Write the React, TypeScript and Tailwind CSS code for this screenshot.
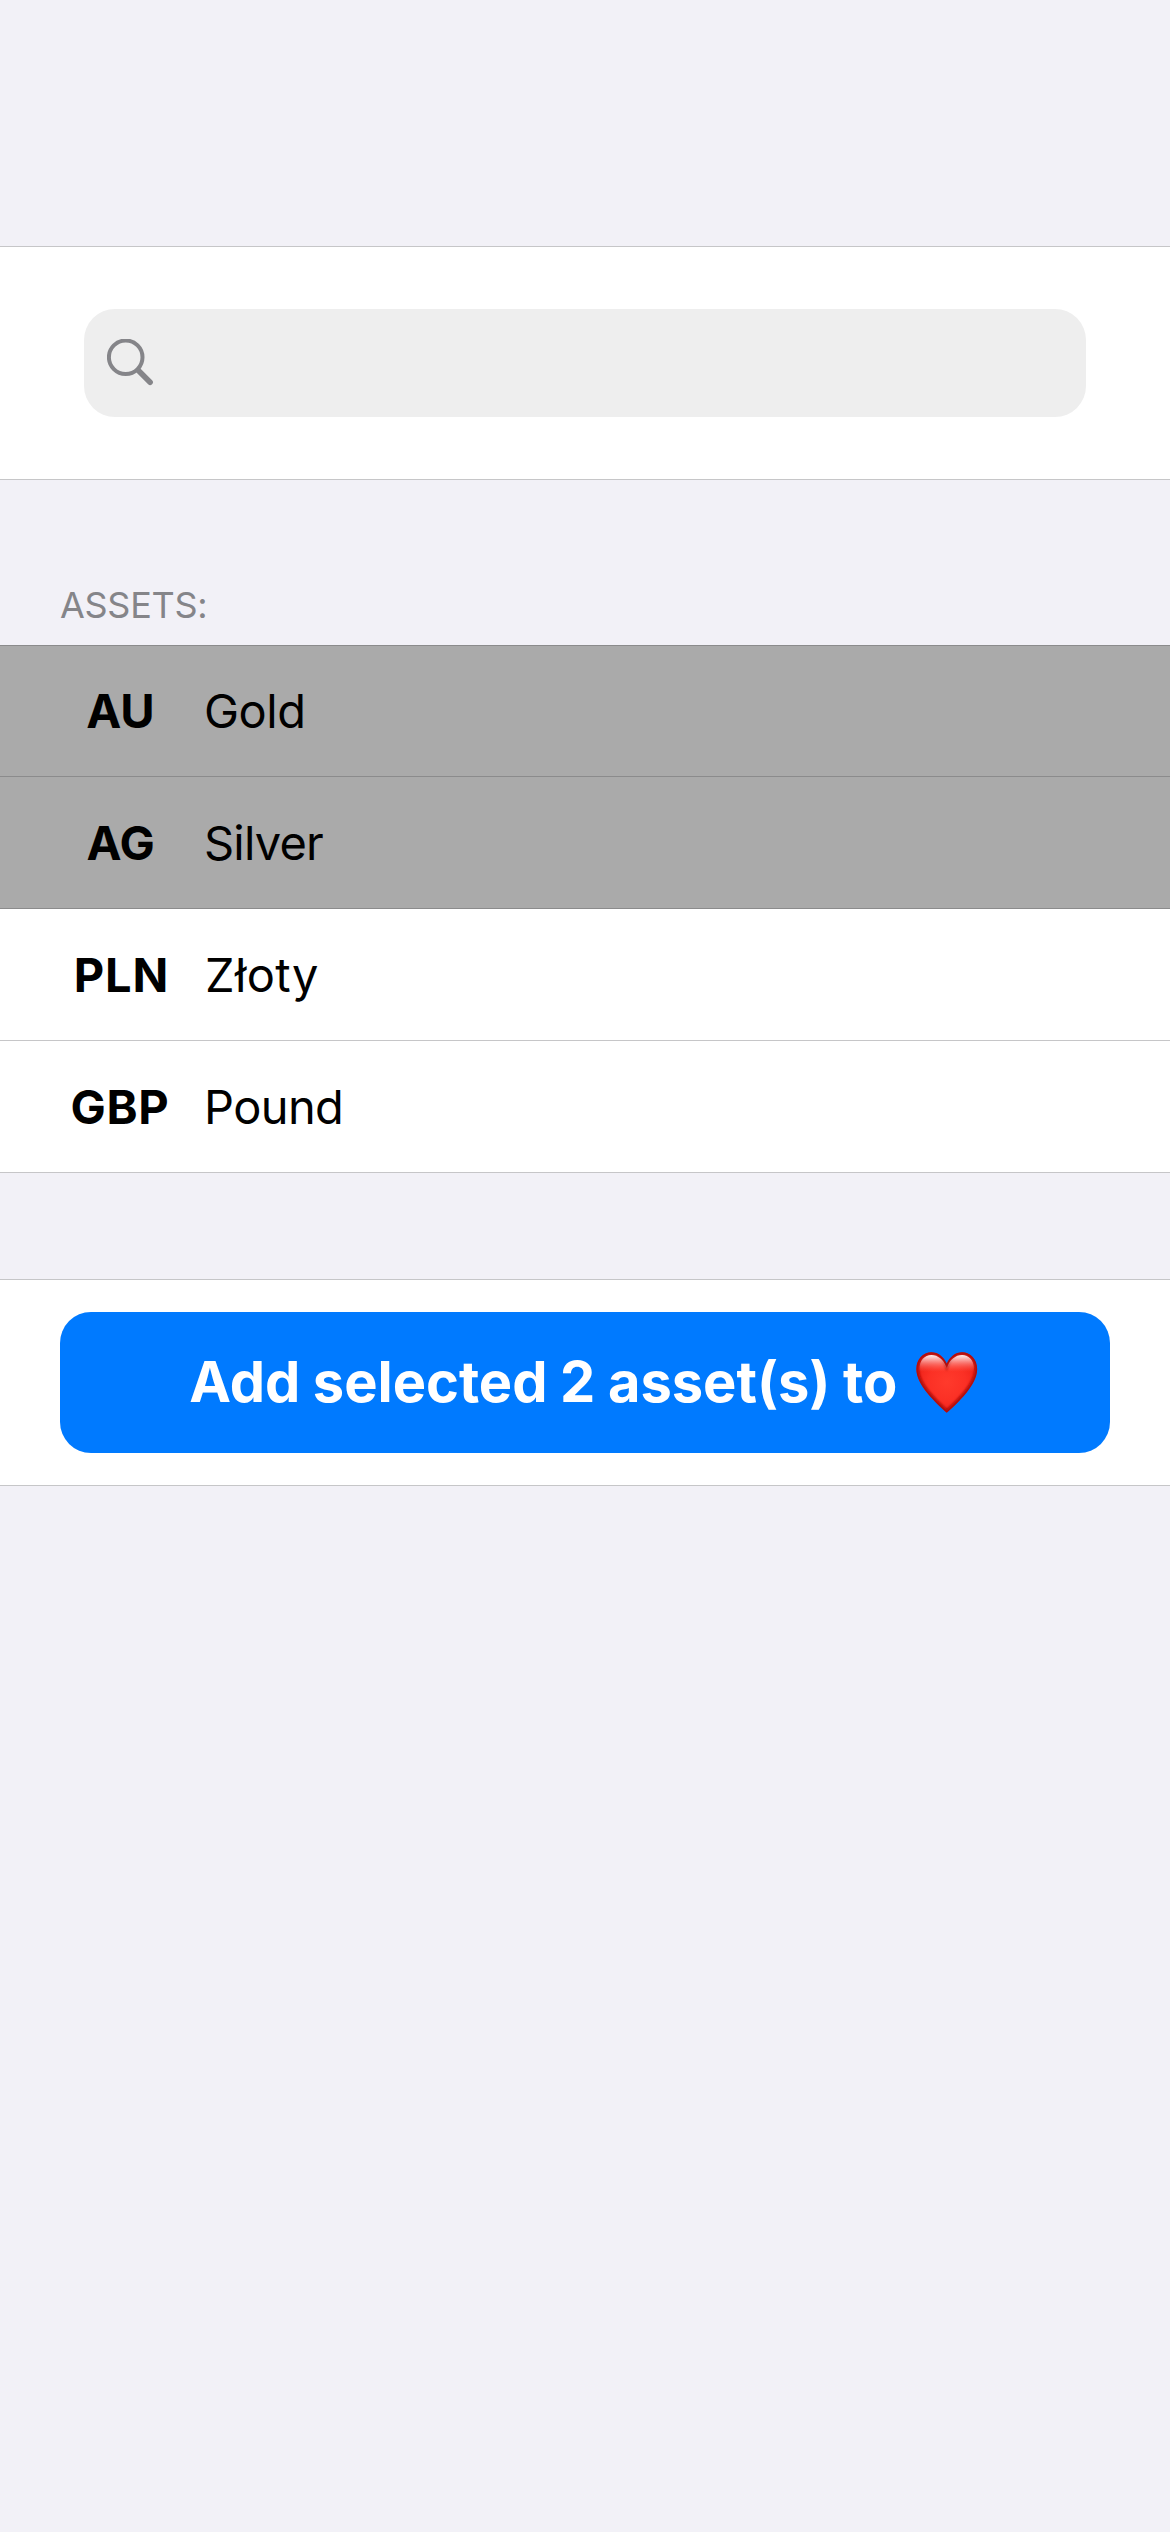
type Asset = {
  code: string;
  name: string;
  selected: boolean;
  codeTracking: string;
  nameTracking: string;
};

const assets: Asset[] = [
  { code: "AU", name: "Gold", selected: true, codeTracking: "tracking-normal", nameTracking: "tracking-[-0.5px]" },
  { code: "AG", name: "Silver", selected: true, codeTracking: "tracking-[-0.3px]", nameTracking: "tracking-[-0.8px]" },
  { code: "PLN", name: "Złoty", selected: false, codeTracking: "tracking-[0.8px] pl-[2px]", nameTracking: "tracking-[0.4px] pl-px" },
  { code: "GBP", name: "Pound", selected: false, codeTracking: "tracking-[0.7px] pr-px", nameTracking: "tracking-[-0.6px]" },
];

function SearchIcon() {
  return (
    <svg width="48" height="48" viewBox="0 0 48 48" fill="none" stroke="#858589" aria-hidden="true">
      <circle cx="18.7" cy="18.3" r="16.8" strokeWidth="4" />
      <path d="M31.4 31.6 43.1 43.3" strokeWidth="5.6" strokeLinecap="round" />
    </svg>
  );
}

const heartPath =
  "M30.75 60.8 C26.5 57.2 17.5 48.6 11.2 41 C4.8 33.2 0.3 25 0.3 17 C0.3 7.2 7 0.2 15.4 0.2 C22.3 0.2 28 5 30.75 11.6 C33.5 5 39.2 0.2 46.1 0.2 C54.5 0.2 61.2 7.2 61.2 17 C61.2 25 56.7 33.2 50.3 41 C44 48.6 35 57.2 30.75 60.8 Z";

function Heart() {
  return (
    <svg className="ml-[19px] mr-[3px] shrink-0" width="61.5" height="61" viewBox="0 0 61.5 61" aria-hidden="true">
      <defs>
        <radialGradient id="body" gradientUnits="userSpaceOnUse" cx="31" cy="30" r="34">
          <stop offset="0" stopColor="#ff3a2c" />
          <stop offset="0.55" stopColor="#fb3025" />
          <stop offset="1" stopColor="#ec2018" />
        </radialGradient>
        <linearGradient id="gloss" x1="0" y1="3" x2="0" y2="20" gradientUnits="userSpaceOnUse">
          <stop offset="0" stopColor="#fff" stopOpacity="0.95" />
          <stop offset="0.35" stopColor="#ffd9d6" stopOpacity="0.6" />
          <stop offset="1" stopColor="#ff6a60" stopOpacity="0" />
        </linearGradient>
        <filter id="rim" x="-20%" y="-20%" width="140%" height="140%">
          <feGaussianBlur stdDeviation="1.3" />
        </filter>
        <filter id="soft" x="-20%" y="-20%" width="140%" height="140%">
          <feGaussianBlur stdDeviation="0.7" />
        </filter>
        <clipPath id="heartClip">
          <path d={heartPath} />
        </clipPath>
      </defs>
      <g clipPath="url(#heartClip)">
        <path d={heartPath} fill="url(#body)" />
        <path d={heartPath} fill="none" stroke="#b00a08" strokeWidth="5.6" filter="url(#rim)" />
        <path
          d="M3.4 17 C3.4 8.5 8.6 3 15.4 3 C22.2 3 27.4 8 29.6 13.6 L30.75 16 L31.9 13.6 C34.1 8 39.3 3 46.1 3 C52.9 3 58.1 8.5 58.1 17 C58.1 19 57.6 21 57 22 L4.5 22 C3.9 21 3.4 19 3.4 17 Z"
          fill="url(#gloss)"
          filter="url(#soft)"
        />
      </g>
    </svg>
  );
}

function AssetRow({ asset, first }: { asset: Asset; first: boolean }) {
  return (
    <li
      className={[
        "flex h-[132px] items-center border-b pl-[60px] text-[47px] leading-[57px] text-black",
        first ? "border-t pb-px" : "",
        asset.selected ? "border-[#8b8b8c] bg-[#aaaaaa]" : "border-[#c6c6c8] bg-white",
      ].join(" ")}
    >
      <span className={`mr-[23px] w-[121px] text-center font-bold ${asset.codeTracking}`}>{asset.code}</span>
      <span className={asset.nameTracking}>{asset.name}</span>
    </li>
  );
}

export default function App() {
  return (
    <main className="flex h-[2532px] w-[1170px] flex-col bg-[#f2f1f7] pt-[246px] font-['Inter',sans-serif]">
      <section className="h-[234px] border-y border-[#c6c6c8] bg-white px-[84px] pt-[62px]">
        <div className="flex h-[108px] items-center rounded-[31px] bg-[#eeeeee] pl-[23px]">
          <SearchIcon />
        </div>
      </section>

      <h2 className="flex h-[165px] items-end pb-[18px] pl-[60px] text-[36px] leading-[44px] tracking-[-0.3px] text-[#858589]">
        ASSETS:
      </h2>

      <ul>
        {assets.map((asset, i) => (
          <AssetRow key={asset.code} asset={asset} first={i === 0} />
        ))}
      </ul>

      <section className="mt-[106px] h-[207px] border-y border-[#c6c6c8] bg-white px-[60px] pt-[32px]">
        <button
          type="button"
          className="flex h-[141px] w-full items-center justify-center rounded-[31px] bg-[#007aff] pb-px text-[56px] leading-[68px] font-bold tracking-[-0.03px] [word-spacing:-0.6px] text-white"
        >
          <span>Add selected 2 asset(s) to</span>
          <Heart />
        </button>
      </section>
    </main>
  );
}
